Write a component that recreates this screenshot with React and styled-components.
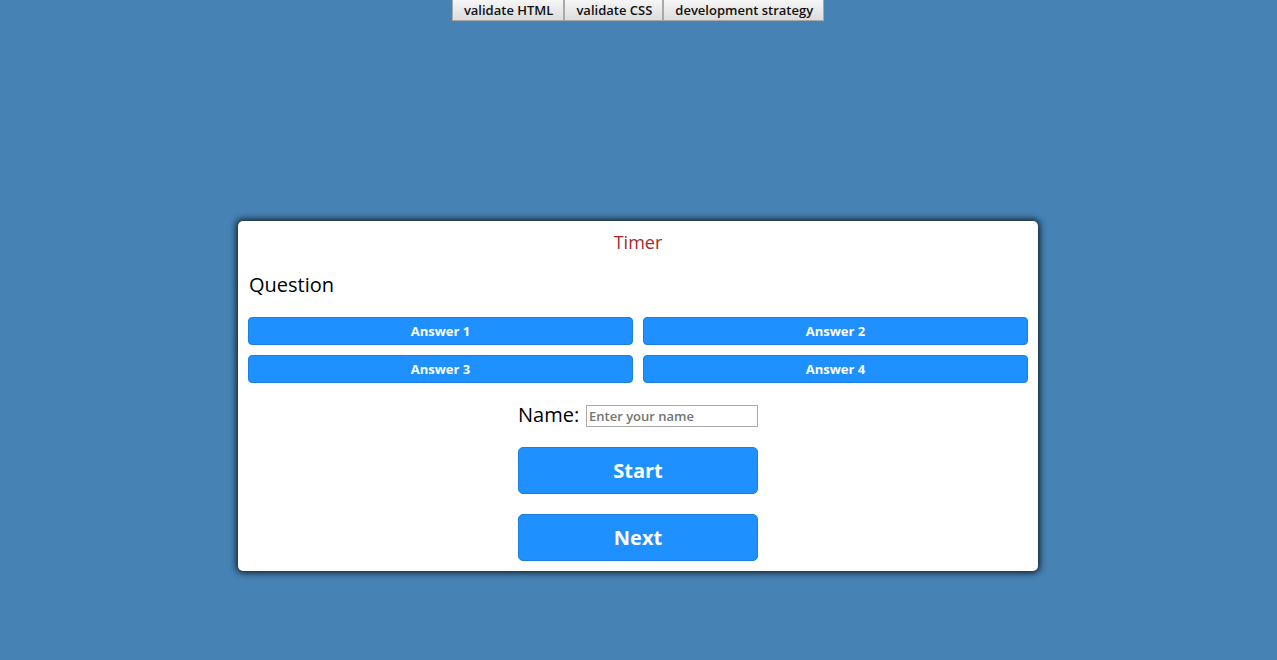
import React from "react";
import styled, { createGlobalStyle } from "styled-components";

const GlobalStyle = createGlobalStyle`
  html, body {
    margin: 0;
    padding: 0;
    background: #4682b4;
    font-family: "Open Sans", "Liberation Sans", sans-serif;
  }
`;

function App() {
  return (
    <Page>
      <GlobalStyle />
      <Nav>
        <NavButton>validate HTML</NavButton>
        <NavButton>validate CSS</NavButton>
        <NavButton>development strategy</NavButton>
      </Nav>

      <Card>
        <Timer>Timer</Timer>
        <Question>Question</Question>

        <Answers>
          <AnswerButton>Answer 1</AnswerButton>
          <AnswerButton>Answer 2</AnswerButton>
          <AnswerButton>Answer 3</AnswerButton>
          <AnswerButton>Answer 4</AnswerButton>
        </Answers>

        <Controls>
          <NameRow>
            <NameLabel htmlFor="name">Name:</NameLabel>
            <NameInput id="name" placeholder="Enter your name" />
          </NameRow>
          <BigButton>Start</BigButton>
          <BigButton>Next</BigButton>
        </Controls>
      </Card>
    </Page>
  );
}

export default App;

const Page = styled.div`
  min-height: 660px;
  padding-right: 1px;
  display: flex;
  flex-direction: column;
  align-items: center;
`;

const Nav = styled.nav`
  display: flex;
  height: 21px;
`;

const NavButton = styled.button`
  font-family: "Open Sans", "Liberation Sans", sans-serif;
  font-size: 13px;
  font-weight: 600;
  color: #111;
  padding: 0 10px 0 11px;
  height: 21px;
  background: linear-gradient(#f6f6f6, #dcdcdc);
  border: 1px solid #a9a9a9;
  border-top: none;
  cursor: pointer;
`;

const Card = styled.div`
  margin-top: 200px;
  width: 800px;
  box-sizing: border-box;
  padding: 10px;
  background: #fff;
  border-radius: 5px;
  box-shadow: 0 0 6px 2px rgba(0, 0, 0, 0.75);
`;

const Timer = styled.div`
  text-align: center;
  color: #a52a2a;
  font-size: 18px;
  line-height: 22px;
`;

const Question = styled.h2`
  margin: 19px 0 0 1px;
  font-size: 20px;
  font-weight: 500;
  line-height: 26px;
  color: #000;
`;

const Answers = styled.div`
  display: grid;
  grid-template-columns: 1fr 1fr;
  gap: 10px;
  margin-top: 19px;
`;

const AnswerButton = styled.button`
  height: 28px;
  border: 1px solid #1a7fe0;
  border-radius: 4px;
  background: #1e90ff;
  color: #fff;
  font-family: "Open Sans", "Liberation Sans", sans-serif;
  font-weight: 700;
  font-size: 13px;
  cursor: pointer;
`;

const Controls = styled.div`
  display: flex;
  flex-direction: column;
  align-items: center;
  margin-top: 22px;
  gap: 20px;
`;

const NameRow = styled.div`
  display: flex;
  align-items: center;
  justify-content: space-between;
  width: 240px;
  height: 22px;
  color: #000;
`;

const NameLabel = styled.label`
  font-size: 20px;
  line-height: 20px;
  padding-bottom: 3px;
`;

const NameInput = styled.input`
  width: 172px;
  height: 22px;
  box-sizing: border-box;
  border: 1px solid #a9a9a9;
  padding: 0 2px;
  font-family: "Open Sans", "Liberation Sans", sans-serif;
  font-size: 13px;
  font-weight: 600;
  &::placeholder {
    color: #757575;
  }
`;

const BigButton = styled.button`
  width: 240px;
  height: 47px;
  border: 1px solid #1a7fe0;
  border-radius: 5px;
  background: #1e90ff;
  color: #fff;
  font-family: "Open Sans", "Liberation Sans", sans-serif;
  font-weight: 700;
  font-size: 20px;
  cursor: pointer;
`;
